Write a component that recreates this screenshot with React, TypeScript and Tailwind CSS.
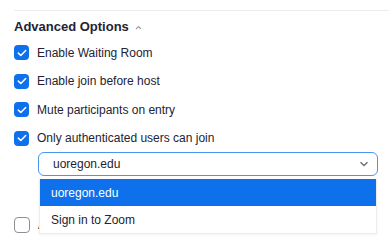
import React from 'react';

const Check: React.FC<{ checked?: boolean }> = ({ checked }) =>
  checked ? (
    <span className="flex h-[15px] w-[15px] shrink-0 items-center justify-center rounded-[4px] bg-[#0e71eb]">
      <svg width="10" height="8" viewBox="0 0 10 8" fill="none">
        <path d="M1.3 4.1L3.8 6.5L8.7 1.5" stroke="white" strokeWidth="1.5" strokeLinecap="round" strokeLinejoin="round" />
      </svg>
    </span>
  ) : (
    <span className="h-4 w-4 shrink-0 rounded-[4px] border border-[#8e8e99] bg-white" />
  );

const Row: React.FC<{ label: string; checked?: boolean; h: string }> = ({ label, checked, h }) => (
  <div className={`flex items-center gap-[8px] ${h}`}>
    <Check checked={checked} />
    <span className="whitespace-nowrap text-[12px] text-[#232333]">{label}</span>
  </div>
);

export default function App() {
  return (
    <div className="h-[245px] w-[389px] overflow-hidden bg-white font-['Liberation_Sans',Arial,sans-serif]">
      <div className="ml-[14px] mt-[10px] border-t border-[#ededf0]" />
      <div className="pl-[14px]">
        <div className="flex h-[27px] items-center gap-[6px] pt-[4px]">
          <span className="text-[13px] font-bold text-[#232333]">Advanced Options</span>
          <svg width="7" height="5" viewBox="0 0 7 5" fill="none" className="mt-[1px]">
            <path d="M1 4L3.5 1.5L6 4" stroke="#a0a0aa" strokeWidth="1.2" />
          </svg>
        </div>
        <Row label="Enable Waiting Room" checked h="h-[29px]" />
        <Row label="Enable join before host" checked h="h-[28px]" />
        <Row label="Mute participants on entry" checked h="h-[29px]" />
        <Row label="Only authenticated users can join" checked h="h-[28px]" />
        <div className="relative ml-[24px] mr-[11px]">
          <div className="flex h-[24px] items-center justify-between rounded-[6px] border border-[#4a95f0] pl-[14px] pr-[8px]">
            <span className="text-[12px] text-[#232333]">uoregon.edu</span>
            <svg width="10" height="6" viewBox="0 0 10 6" fill="none">
              <path d="M1.5 1.2L5 4.5L8.5 1.2" stroke="#6e6e7a" strokeWidth="1.4" />
            </svg>
          </div>
          <div className="absolute left-[1px] right-[1px] top-[27px] z-10 border border-t-0 border-[#ededf0] bg-white shadow-[0_1px_3px_rgba(0,0,0,0.05)]">
            <div className="flex h-[27px] items-center bg-[#0e71eb] pl-[11px] text-[12px] text-white">uoregon.edu</div>
            <div className="flex h-[27px] items-center pl-[11px] text-[12px] text-[#232333]">Sign in to Zoom</div>
          </div>
        </div>
        <div className="mt-[34px]">
          <Row label="Automatically record meeting" h="h-[29px]" />
        </div>
      </div>
    </div>
  );
}
